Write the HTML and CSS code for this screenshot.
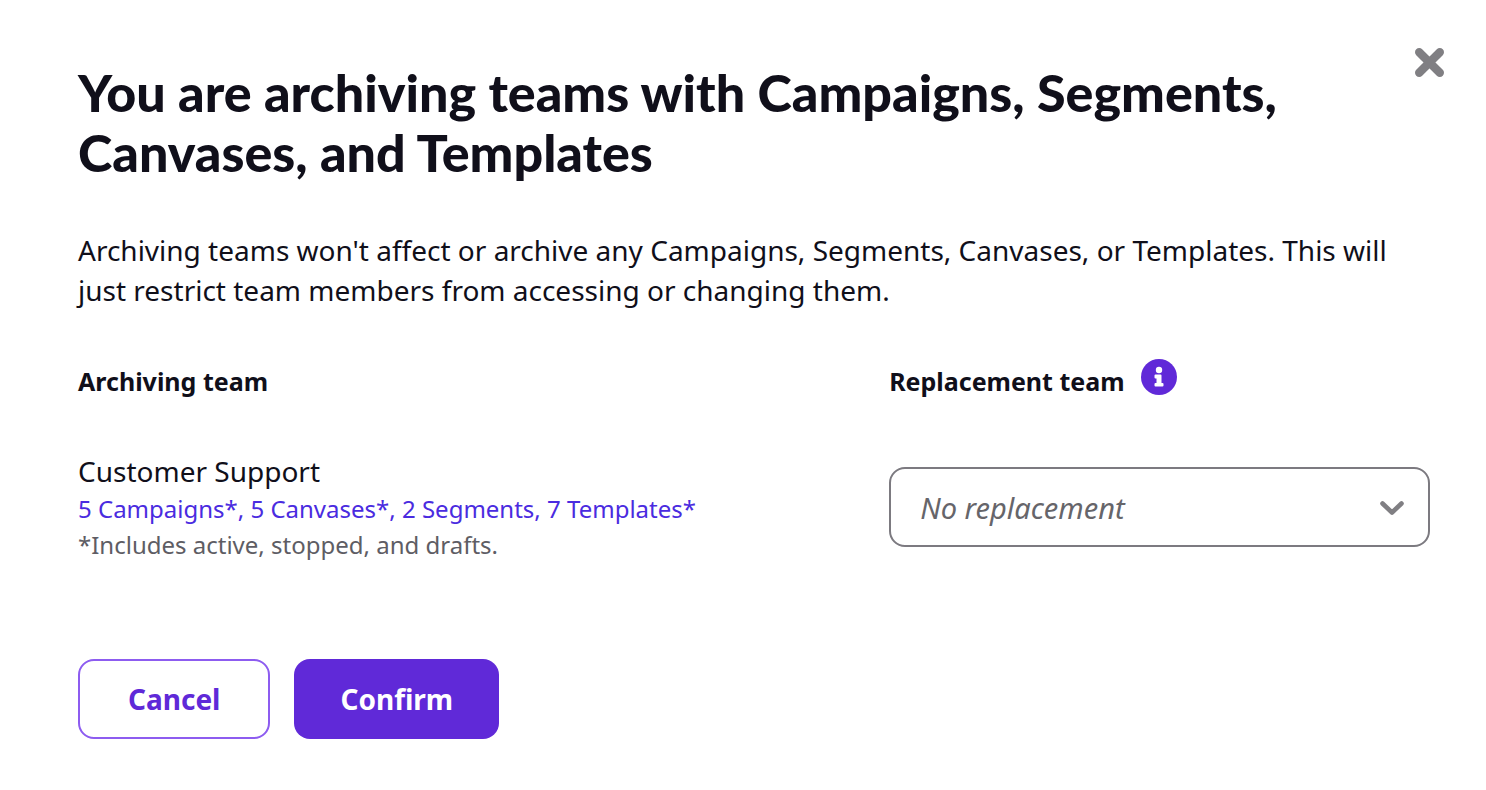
FILE: index.html
```html
<!DOCTYPE html>
<html lang="en">
<head>
<meta charset="utf-8">
<meta name="viewport" content="width=device-width, initial-scale=1">
<title>Archive teams</title>
<link rel="stylesheet" href="styles.css">
</head>
<body>
<main class="dialog" role="dialog" aria-labelledby="dialog-title">
  <header class="dialog-header">
    <h1 class="title" id="dialog-title">You are archiving teams with Campaigns, Segments, Canvases, and Templates</h1>
    <button class="close" type="button" aria-label="Close">
      <svg width="30" height="30" viewBox="0 0 30 30" aria-hidden="true"><path d="M4.200 4.200l20.600 20.600M24.800 4.200L4.200 24.800" fill="none" stroke="#807f83" stroke-width="8.400" stroke-linecap="round"/></svg>
    </button>
  </header>
  <p class="description">Archiving teams won't affect or archive any Campaigns, Segments, Canvases, or Templates. This will just restrict team members from accessing or changing them.</p>
  <div class="teams">
    <section class="team">
      <h2 class="label">Archiving team</h2>
      <p class="team-name">Customer Support</p>
      <p class="counts"><a href="#">5 Campaigns*, 5 Canvases*, 2 Segments, 7 Templates*</a></p>
      <p class="note">*Includes active, stopped, and drafts.</p>
    </section>
    <section class="replacement">
      <div class="label-row">
        <label class="label" for="replacement">Replacement team</label>
        <button class="info" type="button" aria-label="About replacement teams">
          <svg width="36" height="36" viewBox="0 0 36 36" aria-hidden="true"><circle cx="18" cy="18" r="18" fill="#6029d8"/><circle cx="18" cy="11" r="3.200" fill="#fff"/><path d="M14.500 16.500h5v8.500h2v1.500h-7v-1.500h2v-6.500h-2z" fill="#fff" stroke="#fff" stroke-width="2" stroke-linejoin="round"/></svg>
        </button>
      </div>
      <div class="select-wrap">
        <select class="select" id="replacement"><option>No replacement</option></select>
        <svg class="chevron" width="24" height="16" viewBox="0 0 24 16" aria-hidden="true"><path d="M2.500 3.500L12 12.500l9.500-9" fill="none" stroke="#807f83" stroke-width="4.600" stroke-linecap="round" stroke-linejoin="round"/></svg>
      </div>
    </section>
  </div>
  <footer class="actions">
    <button class="button button-outline" type="button">Cancel</button>
    <button class="button button-primary" type="button">Confirm</button>
  </footer>
</main>
</body>
</html>
```
FILE: styles.css
```css
* { box-sizing: border-box; }
body { margin: 0; background: #fff; color: #100f1a; font-family: "Noto Sans", sans-serif; }
h1, h2, p { margin: 0; }
button { padding: 0; border: 0; background: none; font-family: inherit; cursor: pointer; }
svg { display: block; }
.dialog { padding: 48px 56px 52px 78px; }
.dialog-header { display: flex; align-items: flex-start; justify-content: space-between; margin-right: -15px; }
.title { max-width: 1240px; padding-top: 14px; font-family: Lato, sans-serif; font-size: 52px; font-weight: 900; line-height: 60px; }
.close { flex: none; }
.description { margin-top: 48px; font-size: 28px; line-height: 40px; }
.teams { display: grid; grid-template-columns: 3fr 2fr; margin-top: 49px; }
.team { padding-top: 2px; }
.label { font-size: 25px; font-weight: 700; line-height: 40px; }
.team-name { margin-top: 50px; font-size: 28px; line-height: 40px; }
.counts, .note { font-size: 24px; line-height: 36px; }
.counts a { color: #4a2be0; text-decoration: none; }
.note { color: #5e5d64; }
.label-row { display: flex; align-items: flex-start; gap: 16px; }
.label-row .label { margin-top: 2px; }
.select-wrap { position: relative; margin-top: 66px; }
.select { appearance: none; width: 100%; height: 80px; padding: 0 60px 0 29px; border: 2px solid #7c7a80; border-radius: 16px; background: #fff; color: #66656a; font: italic 29px "Noto Sans", sans-serif; }
.chevron { position: absolute; top: 33px; right: 26px; pointer-events: none; }
.actions { display: flex; gap: 24px; margin-top: 96px; }
.button { height: 80px; padding: 0 48px; border: 2px solid #8d5cf0; border-radius: 16px; font-size: 28px; font-weight: 700; color: #5f29d8; }
.button-primary { padding: 0 46px; border: 0; background: #6029d8; color: #fff; }
```
